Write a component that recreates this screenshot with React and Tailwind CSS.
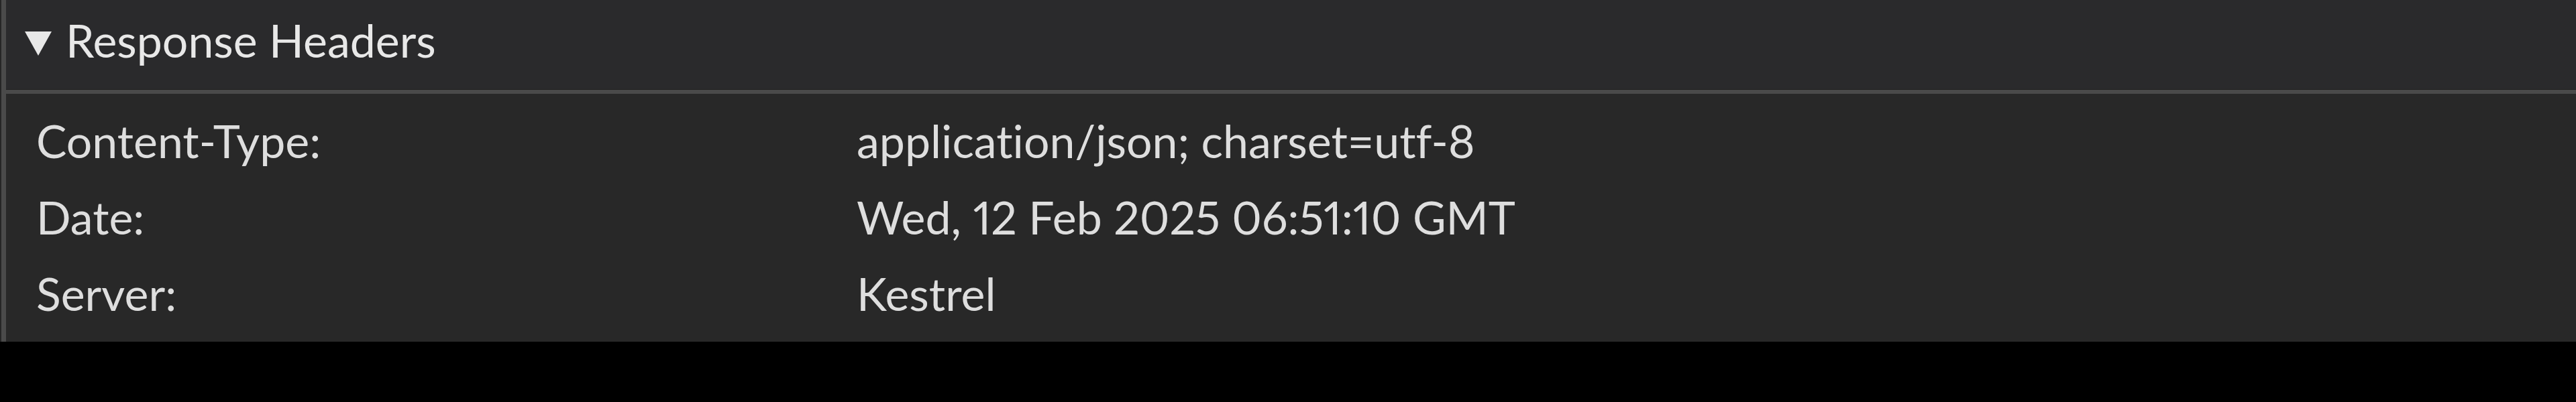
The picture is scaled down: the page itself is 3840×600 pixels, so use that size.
import React from "react";

const rows = [
  ["Content-Type:", "application/json; charset=utf-8"],
  ["Date:", "Wed, 12 Feb 2025 06:51:10 GMT"],
  ["Server:", "Kestrel"],
];

export default function App() {
  return (
    <div
      className="w-full h-[600px] bg-black proportional-nums [font-variant-ligatures:none]"
      style={{ fontFamily: "Lato, 'Open Sans', sans-serif" }}
    >
      <div className="flex h-[510px]">
        <div className="w-[2px] bg-[#262626]" />
        <div className="w-[7px] bg-[#4a4a4a]" />
        <div className="flex-1 flex flex-col">
          <div className="h-[133px] bg-[#2a2a2c] flex items-start pt-[19px] pl-[28px] text-[68px] leading-[82px] text-[#e8e8e8]">
            <svg width="40" height="36" viewBox="0 0 40 36" className="mt-[28px] mr-[21px] shrink-0">
              <polygon points="0,0 40,0 20,36" fill="#e8e8e8" />
            </svg>
            <span>Response Headers</span>
          </div>
          <div className="h-[1px] bg-[#1f1f1f]" />
          <div className="h-[6px] bg-[#4a4a4a]" />
          <div className="flex-1 bg-[#282828] pt-[13px] pl-[45px] text-[68px] leading-[114px] text-[#dedede]">
            {rows.map(([k, v]) => (
              <div key={k} className="grid grid-cols-[1223px_1fr]">
                <span>{k}</span>
                <span>{v}</span>
              </div>
            ))}
          </div>
        </div>
      </div>
    </div>
  );
}
